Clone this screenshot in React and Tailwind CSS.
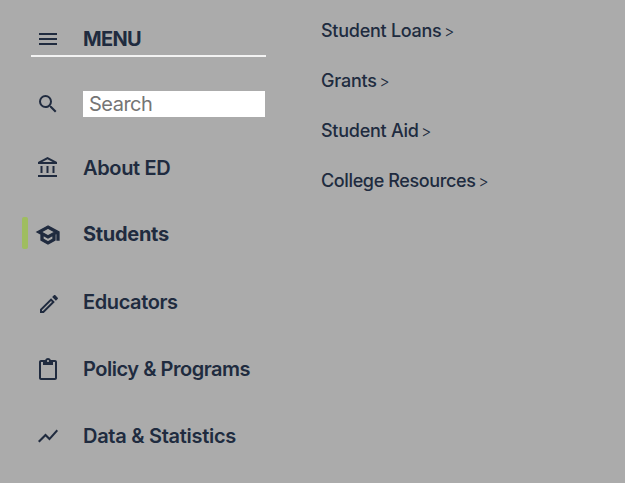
const paths = {
  menu: "M3 18h18v-2H3v2zm0-5h18v-2H3v2zm0-7v2h18V6H3z",
  search: "M15.5 14h-.79l-.28-.27A6.471 6.471 0 0 0 16 9.5 6.5 6.5 0 1 0 9.5 16c1.61 0 3.09-.59 4.23-1.57l.27.28v.79l5 4.99L20.49 19l-4.99-5zm-6 0C7.01 14 5 11.99 5 9.5S7.01 5 9.5 5 14 7.01 14 9.5 11.99 14 9.5 14z",
  bank: "M6.5 10h-2v7h2v-7zm6 0h-2v7h2v-7zm8.5 9H2v2h19v-2zm-2.5-9h-2v7h2v-7zm-7-6.74L16.71 6H6.29l5.21-2.74m0-2.26L2 6v2h19V6l-9.5-5z",
  school: "M12 3L1 9l4 2.18v6L12 21l7-3.82v-6l2-1.09V17h2V9L12 3zm6.82 6L12 12.72 5.18 9 12 5.28 18.82 9zM17 15.99l-5 2.73-5-2.73v-3.72L12 15l5-2.73v3.72z",
  edit: "M14.06 9.02l.92.92L5.92 19H5v-.92l9.06-9.06M17.66 3c-.25 0-.51.1-.7.29l-1.83 1.83 3.75 3.75 1.83-1.83c.39-.39.39-1.02 0-1.41l-2.34-2.34c-.2-.2-.45-.29-.71-.29zm-3.6 3.19L3 17.25V21h3.75L17.81 9.94l-3.75-3.75z",
  clipboard: "M19 2h-4.18C14.4.84 13.3 0 12 0c-1.3 0-2.4.84-2.82 2H5c-1.1 0-2 .9-2 2v16c0 1.1.9 2 2 2h14c1.1 0 2-.9 2-2V4c0-1.1-.9-2-2-2zm-7 0c.55 0 1 .45 1 1s-.45 1-1 1-1-.45-1-1 .45-1 1-1zm7 18H5V4h2v3h10V4h2v16z",
  trend: "M3.5 18.49l6-6.01 4 4L22 6.92l-1.41-1.41-7.09 7.97-4-4L2 16.99l1.5 1.5z",
};

function Icon({ name, className = "" }) {
  return (
    <svg viewBox="0 0 24 24" fill="currentColor" className={`size-6 shrink-0 overflow-visible ${className}`} aria-hidden="true">
      <path d={paths[name]} />
    </svg>
  );
}

const items = [
  { label: "About ED", icon: "bank", row: "h-[66px]", text: "font-semibold tracking-[-0.35px]" },
  { label: "Students", icon: "school", row: "h-[66px]", text: "font-bold tracking-[-0.3px]", iconClass: "mt-px stroke-current stroke-[1.3]", active: true },
  { label: "Educators", icon: "edit", row: "h-[70px]", text: "font-semibold tracking-[-0.4px]", iconClass: "ml-px mt-1 -mr-px" },
  { label: "Policy & Programs", icon: "clipboard", row: "h-[64px]", text: "font-semibold tracking-[-0.47px]", iconClass: "mt-0.5" },
  { label: "Data & Statistics", icon: "trend", row: "h-[70px]", text: "font-semibold tracking-[-0.28px]" },
];

const links = [
  { label: "Student Loans", text: "tracking-[-0.27px]" },
  { label: "Grants", text: "tracking-[-0.2px]" },
  { label: "Student Aid", text: "tracking-[-0.27px]" },
  { label: "College Resources", text: "tracking-[-0.37px]" },
];

export default function App() {
  return (
    <div className="flex h-[483px] w-[625px] overflow-hidden bg-[#ababab] font-['Inter',sans-serif] text-[#202b3f]">
      <nav className="w-[266px] shrink-0 pt-[22px]">
        <div className="ml-[31px] flex h-[35px] items-center border-b-2 border-[#f3f3f3] pl-[5px]">
          <Icon name="menu" />
          <span className="ml-[23px] text-[20px] leading-6 font-bold tracking-[-0.7px]">MENU</span>
        </div>
        <div className="mt-[34px] flex h-[26px] items-center pr-px pl-9">
          <Icon name="search" />
          <input
            type="text"
            placeholder="Search"
            aria-label="Search"
            className="ml-[23px] h-[26px] w-[182px] bg-white px-1.5 text-[20px] leading-6 tracking-[-0.5px] outline-none placeholder:text-[#757575]"
          />
        </div>
        <ul className="mt-[18px]">
          {items.map((item) => (
            <li key={item.label} className={`flex items-center ${item.row}`}>
              <span className={`-mt-0.5 ml-[22px] h-8 w-1.5 shrink-0 rounded-xs ${item.active ? "bg-[#9fbd60]" : ""}`} />
              <a className="ml-2 flex items-center">
                <Icon name={item.icon} className={item.iconClass} />
                <span className={`ml-[23px] text-[20px] leading-6 whitespace-nowrap ${item.text}`}>{item.label}</span>
              </a>
            </li>
          ))}
        </ul>
      </nav>
      <ul className="ml-[55px] flex flex-col pt-[6px]">
        {links.map((link) => (
          <li key={link.label} className="flex h-[50px] items-center whitespace-nowrap">
            <span className={`text-[18px] leading-6 font-medium ${link.text}`}>{link.label}</span>
            <span className="ml-[2.5px] text-[16px] leading-5 font-light">&gt;</span>
          </li>
        ))}
      </ul>
    </div>
  );
}
